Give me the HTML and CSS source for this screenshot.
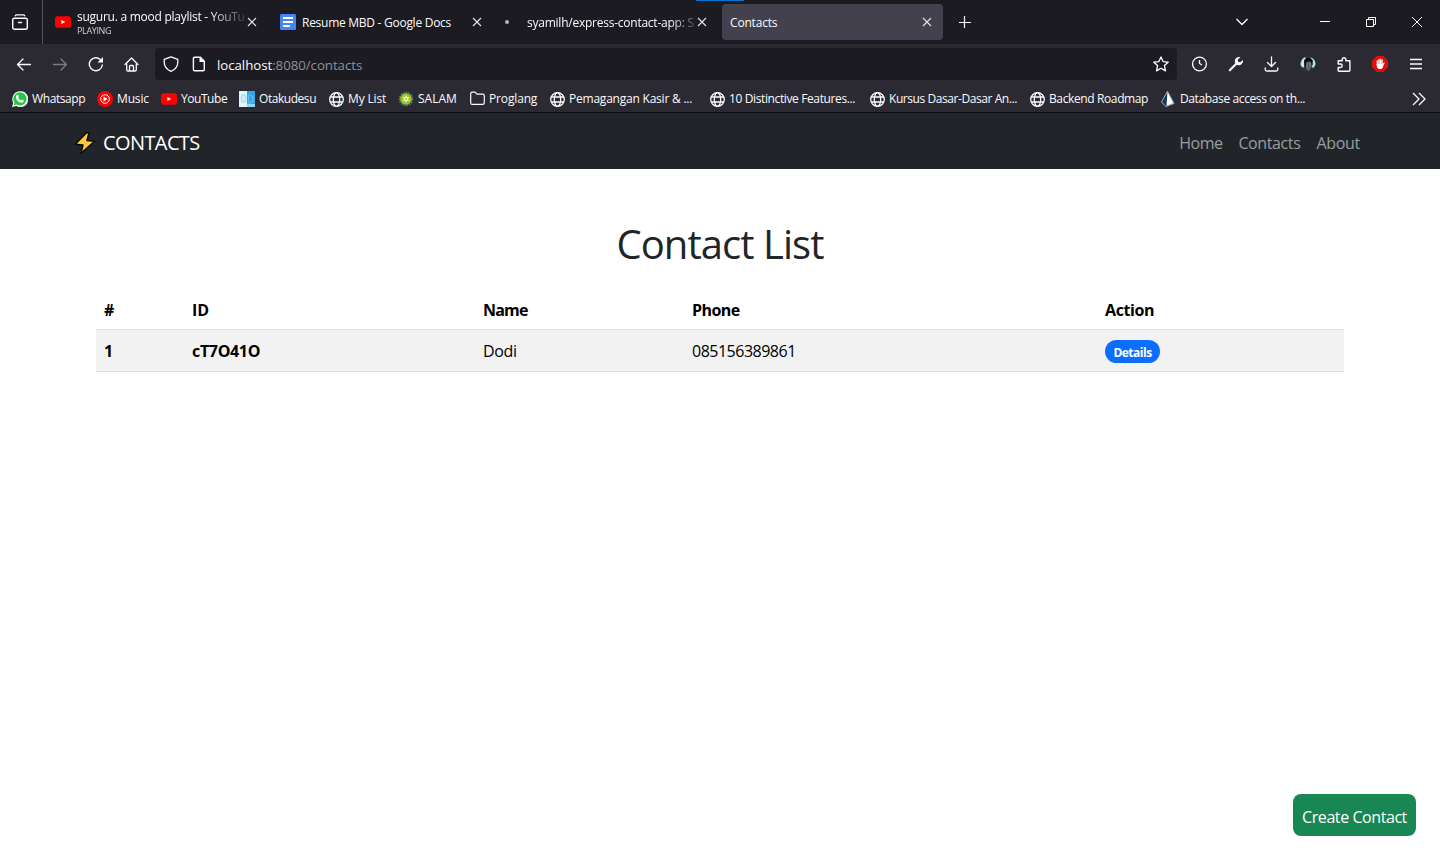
FILE: index.html
```html
<!DOCTYPE html>
<html lang="en">
<head>
<meta charset="utf-8">
<title>Contacts</title>
<link rel="stylesheet" href="styles.css">
</head>
<body>
<svg class="defs" width="0" height="0">
  <symbol id="globe" viewBox="0 0 15 15"><g fill="none" stroke="#fbfbfe" stroke-width="1.3"><circle cx="7.500" cy="7.500" r="6.800"/><ellipse cx="7.500" cy="7.500" rx="3.200" ry="6.800"/><path d="M1.300 5h12.400M1.300 10h12.400"/></g></symbol>
  <symbol id="x" viewBox="0 0 10 10"><path d="M1 1l8 8M9 1L1 9" fill="none" stroke="#e6e6ea" stroke-width="1.1"/></symbol>
  <symbol id="youtube" viewBox="0 0 16 16"><rect x="0" y="2.3" width="16" height="11.4" rx="2.8" fill="#f00"/><path d="M6.4 5.9L10.2 8l-3.800 2.100z" fill="#fff"/></symbol>
</svg>

<header class="browser">
  <div class="tabs">
    <div class="view"><svg width="16" height="16" viewBox="0 0 16 16" fill="none" stroke="#fbfbfe" stroke-width="1.4" stroke-linecap="round"><path d="M3.300 1.800q.4-.9 1.400-.9h6.600q1 0 1.400.9"/><rect x="0.7" y="4.300" width="14.6" height="11" rx="1.8"/><path d="M6.5 8.500h3"/></svg></div>
    <div class="tab tab-video"><svg class="ico" width="16" height="16"><use href="#youtube"/></svg><div class="label two"><span class="t t-video">suguru. a mood playlist - YouTu</span><small>PLAYING</small></div><svg class="close" width="10" height="10"><use href="#x"/></svg></div>
    <div class="tab tab-docs"><svg class="ico" width="16" height="16" viewBox="0 0 16 16"><rect width="16" height="16" rx="1.5" fill="#4285f4"/><path d="M3 4h10M3 8h10M3 12h7" stroke="#fff" stroke-width="1.8"/></svg><div class="label"><span class="t t-docs">Resume MBD - Google Docs</span></div><svg class="close" width="10" height="10"><use href="#x"/></svg></div>
    <div class="tab tab-git"><i class="dot"></i><div class="label fade"><span class="t t-git">syamilh/express-contact-app: S</span></div><svg class="close" width="10" height="10"><use href="#x"/></svg></div>
    <div class="tab tab-active"><div class="label"><span class="t t-act">Contacts</span></div><svg class="close" width="10" height="10"><use href="#x"/></svg></div>
    <svg class="plus" width="12" height="12" viewBox="0 0 12 12"><path d="M5.500 0v12M0 6.500h12" stroke="#fbfbfe" stroke-width="1.2"/></svg>
    <div class="window-buttons">
      <svg width="12" height="8" viewBox="0 0 12 8"><path d="M.5 1L6 6.5 11.500 1" fill="none" stroke="#fbfbfe" stroke-width="1.3"/></svg>
      <svg width="10" height="10"><path d="M0 4.500h10" stroke="#fff"/></svg>
      <svg width="10" height="10" fill="none" stroke="#fff"><path d="M.5 2.500h7v7h-7zM2.500 2.500v-2h7v7h-2"/></svg>
      <svg width="10" height="10"><path d="M0 0l10 10M10 0L0 10" stroke="#fff"/></svg>
    </div>
    <i class="loading"></i>
  </div>

  <div class="toolbar">
    <div class="nav-buttons">
      <svg width="16" height="16" viewBox="0 0 16 16" fill="none" stroke="#fbfbfe" stroke-width="1.3" stroke-linecap="round" stroke-linejoin="round"><path d="M14.500 8.500H1.500M7 3L1.500 8.500 7 14"/></svg>
      <svg width="16" height="16" viewBox="0 0 16 16" fill="none" stroke="#7c7b82" stroke-width="1.3" stroke-linecap="round" stroke-linejoin="round"><path d="M1.500 8.500h13M9 3l5.500 5.500L9 14"/></svg>
      <svg width="16" height="16" viewBox="0 0 16 16"><path d="M13.300 4.700A6.500 6.500 0 1 0 14.300 9" fill="none" stroke="#fbfbfe" stroke-width="1.4" stroke-linecap="round"/><path d="M15 1v5.500H9.500z" fill="#fbfbfe"/></svg>
      <svg width="16" height="16" viewBox="0 0 16 16" fill="none" stroke="#fbfbfe" stroke-width="1.3" stroke-linecap="round" stroke-linejoin="round"><path d="M1 8.500L7.500 2l6.500 6.500M2.700 7.500v6.200q0 1.300 1.300 1.300h7q1.300 0 1.300-1.300V7.500M5.500 15v-4.500q0-1 1-1h2q1 0 1 1V15"/></svg>
    </div>
    <div class="urlbar">
      <svg width="16" height="16" viewBox="0 0 16 16" fill="none" stroke="#fbfbfe" stroke-width="1.3" stroke-linejoin="round"><path d="M8 .8L14.800 3.300V6c0 4.500-2.500 7.500-6.800 9.300C3.700 13.500 1.200 10.500 1.200 6V3.300z"/></svg>
      <svg width="16" height="16" viewBox="0 0 16 16"><path d="M3.700 1.200h5.600l4 4v8.300q0 1.300-1.300 1.300H3.700q-1.300 0-1.300-1.300v-11q0-1.300 1.300-1.300z" fill="none" stroke="#fbfbfe" stroke-width="1.4"/><path d="M8.500 1v5h5z" fill="#fbfbfe"/></svg>
      <span class="t url"><b>localhost</b>:8080/contacts</span>
      <svg class="star" width="16" height="16" viewBox="0 0 16 16" fill="none" stroke="#fbfbfe" stroke-width="1.3" stroke-linejoin="round"><path d="M8 .9l2.100 4.700 5.100.6-3.800 3.400 1.100 5.300L8 12.200l-4.500 2.700 1.100-5.300L.8 6.200l5.100-.6z"/></svg>
    </div>
    <div class="tools">
      <svg width="16" height="16" viewBox="0 0 16 16" fill="none" stroke="#fbfbfe" stroke-width="1.300"><circle cx="7.500" cy="8" r="6.900"/><path d="M7.500 4V7.500l2.500 1.500"/></svg>
      <svg width="16" height="16" viewBox="0 0 16 16"><path d="M1.800 14.200L9 7" stroke="#fbfbfe" stroke-width="2.200" stroke-linecap="round"/><path d="M12.500 1.200A4.200 4.200 0 0 0 7 6.300q.5 2.400 2.700 2.700A4.200 4.200 0 0 0 14.900 4L12.200 6.200 10 5.800l-.2-2.200z" fill="#fbfbfe"/></svg>
      <svg width="16" height="16" viewBox="0 0 16 16" fill="none" stroke="#fbfbfe" stroke-width="1.300" stroke-linecap="round" stroke-linejoin="round"><path d="M7.500 1v9.500M3.500 6.500l4 4 4-4M1.200 12v1.500q0 1.500 1.500 1.500h9.600q1.500 0 1.500-1.500V12"/></svg>
      <svg width="16" height="16" viewBox="0 0 16 16"><circle cx="8" cy="8" r="7.800" fill="#2c3539"/><path d="M4.500 1.200Q.5 4 .5 9l2 2.500 1.800-.5L4 4.500l2-2.500z" fill="#cfe6e6"/><path d="M10 1.200q5.500 1.500 5.500 7.300l-2 3.500-1.500-1 .8-6z" fill="#b5e3e3"/><path d="M4.500 4q3.500-4.500 8 0v5L11 10V5.500L7 6l-1 5.500L4.500 10z" fill="#0b0e10"/><path d="M6.300 6.500l3-1 2 1.500.2 3-1.500 3L8 15l-2-3.500z" fill="#707a7c"/><path d="M8.700 7v4M7 12h3" stroke="#424c4f"/></svg>
      <svg width="16" height="16" viewBox="0 0 16 16" fill="none" stroke="#fbfbfe" stroke-width="1.400" stroke-linejoin="round"><path d="M2.200 8V4.700h4V3a1.900 1.900 0 0 1 3.600 0v1.700h4.100v9.500q0 1-1 1H3.200q-1 0-1-1V11.500h2.300a1.750 1.750 0 0 0 0-3.500z"/></svg>
      <svg width="16" height="16" viewBox="0 0 16 16"><path d="M4.700 0h6.600L16 4.700v6.600L11.300 16H4.700L0 11.300V4.700z" fill="#e40d0d"/><path d="M5.300 5v4M6.900 3.700V9M8.500 3.200V9M10.100 4V9" stroke="#fff" stroke-width="1.300" stroke-linecap="round"/><path d="M4.700 8h6l1.200-1.500q1-.2.600.8L10.700 11.500Q10 13 7.800 13 4.700 12.800 4.700 9z" fill="#fff"/></svg>
      <svg width="16" height="16" viewBox="0 0 16 16" stroke="#fbfbfe" stroke-width="1.300"><path d="M2 3.500h12M2 8h12M2 12.500h12"/></svg>
    </div>
  </div>

  <div class="bookmarks">
    <div><svg width="16" height="16" viewBox="0 0 16 16"><path d="M0 16l1.200-4.200A8 8 0 1 1 4.200 15z" fill="#fff"/><path d="M1.700 14.300l.8-2.700A6.600 6.600 0 1 1 4.700 13.600z" fill="#25c943"/><path d="M4.600 4.300q1.200-1 1.800.1l.5 1.400-.7 1.100q1 1.900 2.800 2.600l1-.9 1.900 1q0 2-2.300 2.100Q5 11.400 4 6.800 3.800 5.200 4.600 4.300z" fill="#fff"/></svg><span class="t b1">Whatsapp</span></div>
    <div><svg width="16" height="16" viewBox="0 0 16 16"><circle cx="8" cy="8" r="8" fill="#f00"/><circle cx="8" cy="8" r="4.300" fill="none" stroke="#fff"/><path d="M6.500 5.500L10.600 8l-4.100 2.500z" fill="#fff"/></svg><span class="t b2">Music</span></div>
    <div><svg width="16" height="16"><use href="#youtube"/></svg><span class="t b3">YouTube</span></div>
    <div><svg width="16" height="16" viewBox="0 0 16 16"><path d="M0 0h8v16H0z" fill="#e2f4fd"/><path d="M8 0h8v16H8z" fill="#2da8e8"/><path d="M8 13h8v3H8z" fill="#91d5f5"/><ellipse cx="4.500" cy="7.500" rx="2" ry="3.500" fill="none" stroke="#a7dcf6" stroke-width="1.500"/><path d="M9.500 4h2q2.500 1 2.500 4t-2.500 4h-2z" fill="none" stroke="#5fc0ef" stroke-width="1.200"/></svg><span class="t b4">Otakudesu</span></div>
    <div><svg width="15" height="15"><use href="#globe"/></svg><span class="t b5">My List</span></div>
    <div><svg width="16" height="16" viewBox="0 0 16 16"><circle cx="8" cy="8" r="6.300" fill="none" stroke="#4d7d65" stroke-width="2.200" stroke-dasharray="1.600 1.000"/><circle cx="8" cy="8" r="5.800" fill="#9ac51f"/><path d="M8 4l1 2.200 2.400-.2L10 8l1.400 2-2.400-.2L8 12l-1-2.200-2.400.2L6 8 4.600 6l2.400.2z" fill="#f4f8c8"/><circle cx="8" cy="8" r="1" fill="#9ac51f"/></svg><span class="t b6">SALAM</span></div>
    <div><svg width="15" height="16" viewBox="0 0 15 16" fill="none" stroke="#fbfbfe" stroke-width="1.200"><path d="M.7 11.700v-9q0-1.600 1.600-1.600h2.700l2 2h5.700q1.600 0 1.600 1.600v7q0 1.600-1.600 1.600H2.300Q.7 13.300.7 11.700z"/></svg><span class="t b7">Proglang</span></div>
    <div><svg width="15" height="15"><use href="#globe"/></svg><span class="t b8">Pemagangan Kasir &amp; ...</span></div>
    <div><svg width="15" height="15"><use href="#globe"/></svg><span class="t b9">10 Distinctive Features...</span></div>
    <div><svg width="15" height="15"><use href="#globe"/></svg><span class="t b10">Kursus Dasar-Dasar An...</span></div>
    <div><svg width="15" height="15"><use href="#globe"/></svg><span class="t b11">Backend Roadmap</span></div>
    <div><svg width="16" height="16" viewBox="0 0 16 16"><path d="M7.500.3L14 12.500 5.800 15.700 1.500 11z" fill="#173b57" stroke="#aebdc9" stroke-width=".9"/><path d="M7.500.8L13.300 12.200 6.500 14.700z" fill="#fff"/></svg><span class="t b12">Database access on th...</span></div>
    <svg class="more" width="14" height="14" viewBox="0 0 14 14" fill="none" stroke="#fbfbfe" stroke-width="1.300"><path d="M1 1l6 6-6 6M7 1l6 6-6 6"/></svg>
  </div>
</header>

<nav class="navbar">
  <div class="brand"><svg width="22" height="24" viewBox="0 0 22 24"><path d="M12.500 1.800L1.300 13.200 9 14 7 22.300 20.500 10.300 13 9.500 15 1.800z" fill="#ffc83d" stroke="#0b0b0b" stroke-width="1.500" stroke-linejoin="round"/></svg><span class="t br">CONTACTS</span></div>
  <div class="links"><a class="t n1">Home</a><a class="t n2">Contacts</a><a class="t n3">About</a></div>
</nav>

<main>
  <h1><span class="t h">Contact List</span></h1>
  <table>
    <thead><tr><th class="c1">#</th><th class="c2">ID</th><th class="c3 name">Name</th><th class="c4 phone">Phone</th><th class="action">Action</th></tr></thead>
    <tbody><tr><th>1</th><th class="id">cT7O41O</th><td class="id">Dodi</td><td class="number">085156389861</td><td><a class="badge">Details</a></td></tr></tbody>
  </table>
</main>
<a class="create">Create Contact</a>
</body>
</html>
```
FILE: styles.css
```css
* { box-sizing: border-box; }
body { margin: 0; height: 860px; overflow: hidden; background: #fff; color: #212529; font: 16px/24px "Open Sans", sans-serif; }
svg { display: block; flex: none; }
.defs { position: absolute; }
.t { white-space: nowrap; }

/* browser chrome */
.browser { height: 113px; background: #2b2a33; border-bottom: 1px solid #0c0c0d; color: #fbfbfe; font-size: 12px; line-height: 16px; }
.tabs { position: relative; display: flex; align-items: center; height: 44px; background: #1c1b22; }
.view { display: flex; align-items: center; width: 43px; height: 44px; padding-left: 12px; border-right: 1px solid #55545b; }
.tab { display: flex; align-items: center; height: 36px; }
.tab .ico { margin-right: 6px; }
.label { flex: 1; min-width: 0; display: flex; padding-top: 2px; }
.two { flex-direction: column; padding-top: 3px; line-height: 14px; mask-image: linear-gradient(90deg, #000 78%, transparent 102%); }
.two small { font-size: 9px; line-height: 13px; letter-spacing: -.35px; color: #d0d0d4; }
.fade { mask-image: linear-gradient(90deg, #000 84%, transparent 102%); }
.tab-video { width: 214px; padding-left: 12px; }
.tab-docs { width: 225px; padding-left: 23px; }
.tab-git { width: 225px; padding-left: 23px; }
.tab-active { width: 221px; margin-left: 15px; padding: 0 11px 0 8px; border-radius: 4px; background: #42414d; }
.t-video { letter-spacing: -.26px; }
.t-docs { letter-spacing: -.27px; }
.t-git { letter-spacing: -.24px; }
.t-act { letter-spacing: -.18px; }
.dot { width: 4px; height: 4px; margin-right: 18px; border-radius: 50%; background: #b5b5ba; }
.plus { margin-left: 16px; }
.window-buttons { display: grid; grid-template-columns: 84px 46px 46px 28px; margin-left: auto; align-items: center; }
.loading { position: absolute; left: 696px; top: 0; width: 48px; height: 1px; background: #0078d7; }
.toolbar { display: flex; align-items: center; height: 40px; }
.nav-buttons { display: flex; gap: 20px; padding: 0 15px 0 16px; }
.urlbar { display: flex; align-items: center; width: 1022px; height: 32px; padding: 0 8px; border-radius: 4px; background: #1c1b22; color: #919097; font-size: 13.3px; gap: 12px; }
.url { margin-left: -2px; padding-top: 2px; letter-spacing: -.06px; }
.url b { font-weight: 400; color: #fbfbfe; }
.star { margin-left: auto; }
.tools { display: flex; gap: 20px; margin-left: 15px; }
.bookmarks { display: grid; grid-template-columns: 85px 64px 78px 90px 69px 72px 80px 160px 160px 160px 130px 1fr 28px; align-items: center; height: 28px; margin-top: 1px; padding-left: 12px; }
.bookmarks div { display: flex; align-items: center; gap: 4px; }
.b1 { letter-spacing: -.4px; }
.b2, .b5, .b7 { letter-spacing: -.15px; }
.b3, .b4 { letter-spacing: -.45px; }
.b8 { letter-spacing: -.22px; }
.b9, .b11, .b12 { letter-spacing: -.38px; }
.b10 { letter-spacing: -.43px; }

/* site navigation */
.navbar { display: flex; justify-content: space-between; height: 56px; padding: 3px 80px 0 74px; align-items: center; background: #212529; color: #9b9d9e; }
.brand { display: flex; align-items: center; gap: 7px; color: #fff; font-size: 20px; line-height: 30px; }
.br { letter-spacing: -.6px; }
.links { display: flex; gap: 16px; }
.n1 { letter-spacing: -.55px; }
.n2 { letter-spacing: -.38px; }
.n3 { letter-spacing: -.3px; }

/* contact table */
main { padding: 0 96px; }
h1 { margin: 0; padding-top: 51px; font-size: 40px; line-height: 48px; font-weight: 400; letter-spacing: -.95px; text-align: center; }
table { width: 100%; margin-top: 21px; table-layout: fixed; border-collapse: separate; border-spacing: 0; color: #000; }
th, td { height: 41px; padding: 9px 8px 7px; text-align: left; border-bottom: 1px solid #dee2e6; line-height: 24px; }
.c1 { width: 88px; letter-spacing: -.5px; }
.c2 { width: 291px; }
.c3 { width: 209px; }
.c4 { width: 413px; }
.name { letter-spacing: -.8px; }
.phone { letter-spacing: -.55px; }
.action { letter-spacing: -.4px; }
.id { letter-spacing: -.33px; }
.number { letter-spacing: -.5px; }
tbody th, tbody td { height: 42px; padding: 8px; background: #f2f2f2; }
.badge { display: block; width: 55px; height: 23px; margin-top: 2px; border-radius: 12px; background: #0d6efd; color: #fff; font: 700 12px/25px "Open Sans", sans-serif; letter-spacing: -.5px; text-align: center; }
.create { position: fixed; right: 24px; bottom: 24px; width: 123px; height: 42px; border-radius: 8px; background: #198754; color: #fff; line-height: 46px; letter-spacing: -.43px; text-align: center; }
```
